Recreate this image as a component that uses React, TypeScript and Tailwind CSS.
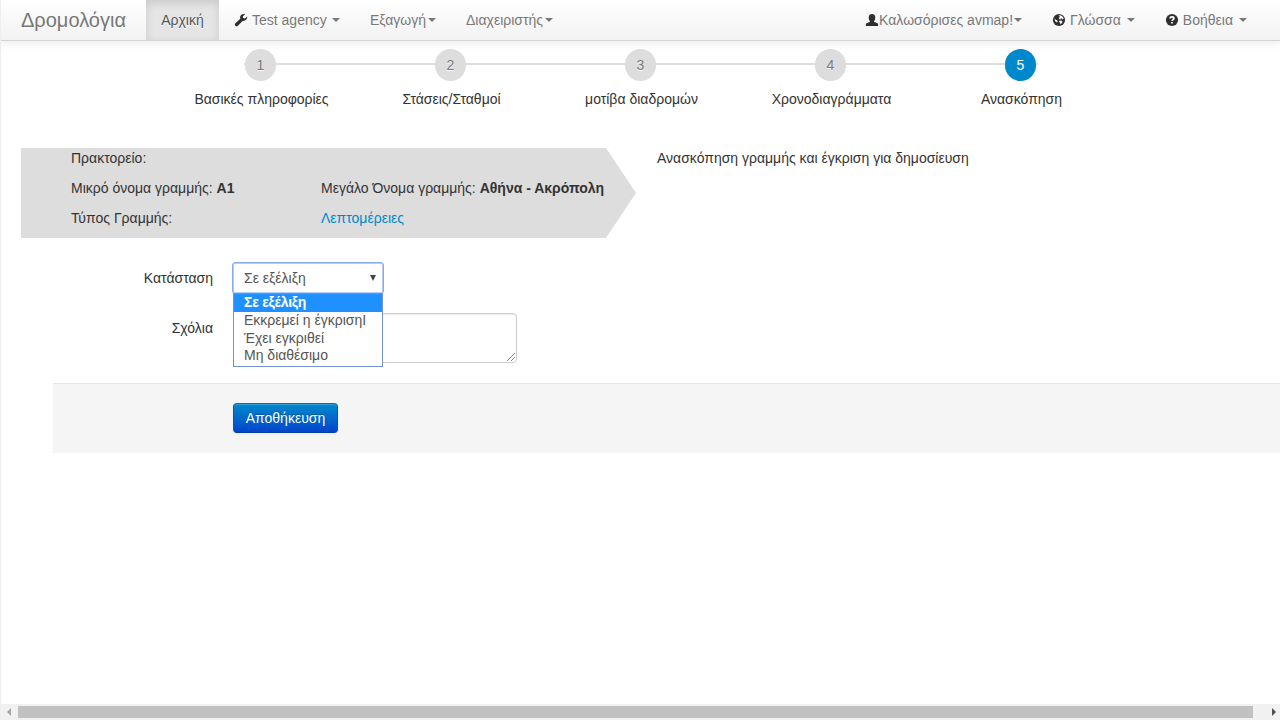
import type { ReactNode } from "react";

const steps = ["Βασικές πληροφορίες", "Στάσεις/Σταθμοί", "μοτίβα διαδρομών", "Χρονοδιαγράμματα", "Ανασκόπηση"];
const options = ["Σε εξέλιξη", "Εκκρεμεί η έγκρισηΙ", "Έχει εγκριθεί", "Μη διαθέσιμο"];

function Caret({ className = "" }: { className?: string }) {
  return (
    <span
      className={`h-0 w-0 shrink-0 border-x-4 border-t-4 border-x-transparent border-t-[#777777] ${className}`}
    />
  );
}

function Icon({ children }: { children: ReactNode }) {
  return (
    <svg viewBox="0 0 14 14" className="h-3.5 w-3.5 shrink-0" fill="#2f2f2f">
      {children}
    </svg>
  );
}

function Navbar() {
  return (
    <header className="relative z-10 flex h-[41px] items-stretch border-b border-[#d4d4d4] bg-linear-to-b from-white to-[#f2f2f2] leading-5 text-[#777777] shadow-[0_1px_10px_rgba(0,0,0,0.1)] [text-shadow:0_1px_0_#ffffff]">
      <div className="w-[145px] pt-2.5 pl-5 text-xl leading-5">Δρομολόγια</div>
      <div className="w-[73px] bg-[#e5e5e5] pt-2.5 text-center text-[#555555] shadow-[inset_0_3px_8px_rgba(0,0,0,0.125)]">
        Αρχική
      </div>
      <div className="flex w-[136px] items-center pl-[15px]">
        <Icon>
          <path d="M13.2 3.5 10.9 5.6 9.2 5 8.8 3.3 11.1 1.2C8.6.2 5.9 1.8 6.1 4.6c0 .5.1.8.2 1.1L1.4 10.3c-1.6 1.6.8 4.1 2.5 2.4l4.7-4.8c2.7.5 5-1.8 4.6-4.4Z" />
        </Icon>
        <span className="ml-1">Test agency</span>
        <Caret className="ml-[5px]" />
      </div>
      <div className="flex w-24 items-center pl-[15px]">
        <span>Εξαγωγή</span>
        <Caret className="ml-0.5" />
      </div>
      <div className="flex items-center pl-[15px]">
        <span>Διαχειριστής</span>
        <Caret className="ml-0.5" />
      </div>
      <div className="ml-auto flex items-center pr-[15px]">
        <Icon>
          <path d="M.9 12.9v-1.6c0-.6.5-.9 1.2-1.2l2.5-1c.5-.2.5-.8.2-1.2C3.8 6.9 3.7 5.7 3.8 3.7 3.9 1.9 5.2 1 7 1s3.1.9 3.2 2.7c.1 2 0 3.2-1 4.2-.3.4-.3 1 .2 1.2l2.5 1c.7.3 1.2.6 1.2 1.2v1.6Z" />
        </Icon>
        <span>Καλωσόρισες avmap!</span>
        <Caret className="ml-px" />
      </div>
      <div className="flex items-center px-[15px]">
        <Icon>
          <circle cx="7" cy="7" r="6.1" />
          <path
            fill="#f8f8f8"
            d="M6.5 2.5 8.7 2.3l2.1 1.5.9 2-1.2.6-.6-1-1.2.1-.3 1.1-1.2-.4-.2-1.5.9-.9ZM7.8 7.4l2 .3.7.9-.9 1.8-1.4.6-.3-1.5-.9-.9ZM2.5 5.2l1.3 1.5 1.3.5.6 1.2-.6 1-1.4-.6-.8-1.2Z"
          />
        </Icon>
        <span className="ml-1">Γλώσσα</span>
        <Caret className="ml-1.5" />
      </div>
      <div className="mr-[18px] flex items-center px-[15px]">
        <Icon>
          <circle cx="7" cy="7" r="6.1" />
          <path
            d="M5 5.5C5.1 4.3 5.9 3.8 7 3.8s1.9.6 1.9 1.6C8.9 6.6 7.1 6.6 7 7.9M7 9v1.6"
            fill="none"
            stroke="#ffffff"
            strokeWidth="1.7"
          />
        </Icon>
        <span className="ml-1">Βοήθεια</span>
        <Caret className="ml-1.5" />
      </div>
    </header>
  );
}

function Wizard() {
  return (
    <div className="relative ml-[164px] flex pt-2">
      <div className="absolute top-[22px] left-[79px] h-0.5 w-[794px] bg-[#dddddd]" />
      {steps.map((label, i) => (
        <div key={label} className="relative flex w-[190px] flex-col items-center">
          <span
            className={`flex h-8 w-[31px] items-center justify-center rounded-full pl-px ${
              i === 4 ? "bg-[#0088cc] text-white" : "bg-[#dddddd] text-[#777777] [text-shadow:0_1px_0_#ffffff]"
            }`}
          >
            {i + 1}
          </span>
          <span className="mt-2 pl-[3px] whitespace-nowrap">{label}</span>
        </div>
      ))}
    </div>
  );
}

function Summary() {
  return (
    <div className="mt-[39px] ml-5 flex">
      <div className="grid h-[90px] w-[615px] grid-cols-[250px_1fr] grid-rows-3 bg-[#dddddd] pl-[50px] whitespace-nowrap [clip-path:polygon(0_0,585px_0,100%_50%,585px_100%,0_100%)]">
        <span className="col-span-2">Πρακτορείο:</span>
        <span>
          Μικρό όνομα γραμμής: <b>A1</b>
        </span>
        <span>
          Μεγάλο Όνομα γραμμής: <b>Αθήνα - Ακρόπολη</b>
        </span>
        <span>Τύπος Γραμμής:</span>
        <a className="text-[#0088cc]">Λεπτομέρειες</a>
      </div>
      <p className="ml-[21px]">Ανασκόπηση γραμμής και έγκριση για δημοσίευση</p>
    </div>
  );
}

function StatusForm() {
  return (
    <form className="mt-[25px] ml-[52px]">
      <div className="flex h-[50px]">
        <label className="mr-5 w-40 pt-[5px] text-right">Κατάσταση</label>
        <div className="relative z-10 h-[30px] w-[150px]">
          <div className="-mt-px -ml-px flex h-8 w-[152px] items-center justify-between rounded-[3px] border border-[#86acee] bg-white pr-[7px] pl-[11px] text-[#555555] shadow-[inset_0_0_0_1px_#b4cbf3]">
            <span>Σε εξέλιξη</span>
            <svg viewBox="0 0 6 6" className="h-1.5 w-1.5" fill="#444444">
              <path d="M0 0h6L3 6Z" />
            </svg>
          </div>
          <ul className="absolute top-[30px] left-0 h-[74px] w-[150px] border border-[#7193d3] bg-white text-[#555555]">
            {options.map((option, i) => (
              <li
                key={option}
                className={`pl-2.5 whitespace-nowrap ${
                  i === 0
                    ? "h-[18px] bg-[#1e90ff] leading-[17px] font-bold tracking-[-0.25px] text-white"
                    : "h-[17.6px] leading-[17px]"
                }`}
              >
                {option}
              </li>
            ))}
          </ul>
        </div>
      </div>
      <div className="flex">
        <label className="mr-5 w-40 pt-[5px] text-right">Σχόλια</label>
        <div className="flex h-[50px] w-[284px] items-end justify-end rounded border border-[#cccccc] bg-white shadow-[inset_0_1px_1px_rgba(0,0,0,0.075)]">
          <svg viewBox="0 0 10 10" className="h-2.5 w-2.5" fill="none" stroke="#777777" strokeWidth="0.9">
            <path d="m1 9 8-8M5 9l4-4" />
          </svg>
        </div>
      </div>
      <div className="mt-5 h-[70px] border-t border-[#e5e5e5] bg-[#f5f5f5] pt-[19px] pl-[180px]">
        <button
          type="button"
          className="block h-[30px] w-[105px] rounded border border-[#0057c0] border-t-[#006bb8] border-b-[#003da0] bg-linear-to-b from-[#0088cc] to-[#0044cc] text-center leading-5 text-white shadow-[inset_0_1px_0_rgba(255,255,255,0.2),0_1px_2px_rgba(0,0,0,0.05)] [text-shadow:0_-1px_0_rgba(0,0,0,0.25)]"
        >
          Αποθήκευση
        </button>
      </div>
    </form>
  );
}

function Scrollbar() {
  return (
    <div className="mt-auto flex h-4 items-center bg-[#f1f1f1] pr-1 pl-[6px]">
      <svg viewBox="0 0 4 8" className="h-2 w-1" fill="#a3a3a3">
        <path d="M4 0v8L0 4Z" />
      </svg>
      <div className="ml-[7px] h-3 w-[1235px] bg-[#c1c1c1]" />
      <svg viewBox="0 0 4 8" className="ml-auto h-2 w-1" fill="#505050">
        <path d="M0 0v8l4-4Z" />
      </svg>
    </div>
  );
}

export default function App() {
  return (
    <div className="flex h-[720px] w-[1280px] flex-col overflow-hidden border-l border-[#eeeeee] bg-white font-['Liberation_Sans',Arial,sans-serif] text-sm leading-5 text-[#333333]">
      <Navbar />
      <Wizard />
      <Summary />
      <StatusForm />
      <Scrollbar />
    </div>
  );
}
